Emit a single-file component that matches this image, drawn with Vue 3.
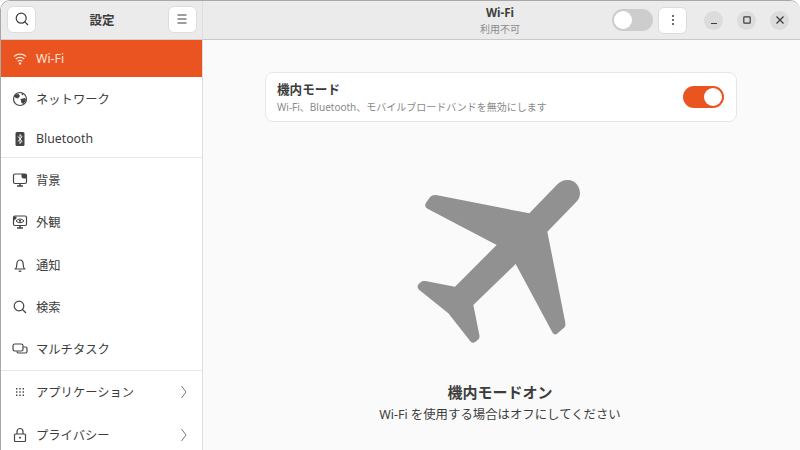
<script setup>
const groups = [
  [
    { label: 'Wi-Fi', icon: 'wifi', h: 37, active: true },
    { label: 'ネットワーク', icon: 'globe', h: 43 },
    { label: 'Bluetooth', icon: 'bt', h: 37 },
  ],
  [
    { label: '背景', icon: 'bg', h: 42 },
    { label: '外観', icon: 'look', h: 42 },
    { label: '通知', icon: 'bell', h: 43 },
    { label: '検索', icon: 'search', h: 42 },
    { label: 'マルチタスク', icon: 'multi', h: 42 },
  ],
  [
    { label: 'アプリケーション', icon: 'apps', h: 42, more: true },
    { label: 'プライバシー', icon: 'lock', h: 43, more: true },
  ],
]
</script>

<template>
  <div class="window">
    <aside class="sidebar">
      <header class="side-head">
        <button class="btn">
          <svg width="16" height="16" viewBox="0 0 16 16" fill="none" stroke="#3d3d3d" stroke-width="1.2">
            <circle cx="7.2" cy="7.2" r="5" />
            <path d="M10.8 10.8 14 14" />
          </svg>
        </button>
        <span class="side-title">設定</span>
        <button class="btn">
          <svg width="14" height="14" viewBox="0 0 14 14" fill="none" stroke="#3d3d3d" stroke-width="1.1">
            <path d="M2.500 3h9M2.500 7h9M2.500 11h9" />
          </svg>
        </button>
      </header>

      <div v-for="(group, g) in groups" :key="g" class="group">
        <div
          v-for="row in group"
          :key="row.label"
          class="row"
          :class="{ active: row.active }"
          :style="{ height: row.h + 'px' }"
        >
          <svg class="row-icon" width="16" height="16" viewBox="0 0 16 16" fill="none" stroke="currentColor" stroke-width="1.200">
            <template v-if="row.icon === 'wifi'">
              <path d="M2 5.500a9 9 0 0 1 12 0M3.800 8a6.200 6.200 0 0 1 8.400 0M5.700 10.300a3.200 3.200 0 0 1 4.600 0" />
              <circle cx="8" cy="12.500" r="1.200" fill="currentColor" stroke="none" />
            </template>
            <template v-else-if="row.icon === 'globe'">
              <circle cx="8" cy="8" r="6.500" />
              <path d="M3 3.500 6.500 3 8 5 6 7.500l-2-.5-2-1.500zM8.500 8l4.500-1 1 2-2.500 4-2-1zM9.500 2l2.500 1-2 1.500z" fill="currentColor" stroke="none" />
            </template>
            <template v-else-if="row.icon === 'bt'">
              <rect x="3.500" y="1" width="9" height="14" rx="1.500" fill="currentColor" stroke="none" />
              <path d="M6 5.500 10 10.200 8 12.500V3.500L10 5.800 6 10.500" stroke="#fff" stroke-width=".9" />
            </template>
            <template v-else-if="row.icon === 'bg'">
              <rect x="1.500" y="2" width="13" height="9.500" rx="1.500" />
              <path d="M5 14h6M8 11.500V14" stroke-width="1.500" />
              <path d="M9.500 2h5v4.500h-2.500a2.500 2.500 0 0 1-2.500-2.500z" fill="currentColor" stroke="none" />
            </template>
            <template v-else-if="row.icon === 'look'">
              <rect x="1.500" y="2" width="13" height="9.500" rx="1.500" />
              <path d="M5 14h6M8 11.500V14" stroke-width="1.500" />
              <path d="M4 7c2.500-2.600 5.500-2.600 8 0-2.500 2.300-5.500 2.300-8 0z" stroke-width="1" />
              <circle cx="8" cy="6.900" r="1.100" fill="currentColor" stroke="none" />
              <path d="M2 2.500h2.500v2L2 6.500z" fill="currentColor" stroke="none" />
            </template>
            <template v-else-if="row.icon === 'bell'">
              <path d="M3.500 12c1.200-1.200 1.300-2.400 1.300-4.500C4.800 5 6 3 8 3s3.200 2 3.200 4.500c0 2.100.1 3.300 1.300 4.500z" />
              <path d="M6.700 14.200h2.600" stroke-width="1.300" />
            </template>
            <template v-else-if="row.icon === 'search'">
              <circle cx="7" cy="7" r="4.800" />
              <path d="M10.500 10.500 14 14" />
            </template>
            <template v-else-if="row.icon === 'multi'">
              <rect x="1" y="3" width="10" height="7" rx="1.800" />
              <path d="M11.500 6H13.500a1.500 1.500 0 0 1 1.500 1.500v3A1.500 1.500 0 0 1 13.500 12H6.500A1.500 1.500 0 0 1 5 10.500" />
            </template>
            <template v-else-if="row.icon === 'apps'">
              <path d="M4 4h1.400v1.400H4zM7.300 4h1.400v1.400H7.300zM10.600 4H12v1.400h-1.400zM4 7.300h1.400v1.400H4zM7.300 7.300h1.400v1.400H7.300zM10.600 7.300H12v1.400h-1.400zM4 10.600h1.400V12H4zM7.300 10.600h1.400V12H7.300zM10.600 10.600H12V12h-1.400z" fill="currentColor" stroke="none" />
            </template>
            <template v-else>
              <rect x="2.500" y="7" width="11" height="7.500" rx="1" />
              <path d="M5 7V4.500a3 3 0 0 1 6 0V7" />
              <circle cx="8" cy="10.700" r="1" fill="currentColor" stroke="none" />
            </template>
          </svg>
          <span class="row-label">{{ row.label }}</span>
          <svg v-if="row.more" class="chevron" width="8" height="14" viewBox="0 0 8 14" fill="none" stroke="#777" stroke-width="1">
            <path d="M1.500 1 6 7l-4.500 6" />
          </svg>
        </div>
      </div>
    </aside>

    <section class="content">
      <header class="main-head">
        <span></span>
        <div class="head-title">
          <strong>Wi-Fi</strong>
          <small>利用不可</small>
        </div>
        <div class="head-actions">
          <div class="toggle off"><i></i></div>
          <button class="btn dots">
            <svg width="4" height="12" viewBox="0 0 4 12" fill="#3d3d3d">
              <circle cx="2" cy="2" r="1" />
              <circle cx="2" cy="6" r="1" />
              <circle cx="2" cy="10" r="1" />
            </svg>
          </button>
          <div class="win-btns">
            <button class="win-btn">
              <svg width="10" height="10" viewBox="0 0 10 10" stroke="#3d3d3d" stroke-width="1.200"><path d="M2 8.500h6" /></svg>
            </button>
            <button class="win-btn">
              <svg width="10" height="10" viewBox="0 0 10 10" fill="none" stroke="#3d3d3d" stroke-width="1.200"><rect x="1.800" y="1.800" width="6.400" height="6.400" rx=".6" /></svg>
            </button>
            <button class="win-btn">
              <svg width="10" height="10" viewBox="0 0 10 10" stroke="#3d3d3d" stroke-width="1.300"><path d="M1.500 1.500 8.500 8.500M8.500 1.500 1.500 8.500" /></svg>
            </button>
          </div>
        </div>
      </header>

      <main class="page">
        <div class="card">
          <div class="card-text">
            <div class="card-title">機内モード</div>
            <div class="card-sub">Wi-Fi、Bluetooth、モバイルブロードバンドを無効にします</div>
          </div>
          <div class="toggle on"><i></i></div>
        </div>

        <svg class="plane" width="200" height="180" viewBox="0 0 600 540" fill="#919191">
          <path d="M388 130 470 45C480 35 490 30 503 30 525 30 540 48 540 70 540 82 535 92 525 100L442 185 496 458C497 466 496 470 490 475L473 490C466 496 461 494 457 487L347 282 220 405 238 495C239 503 238 506 233 510L226 516C220 520 215 519 211 514L145 430 58 360C52 355 51 347 56 342L62 337C66 333 70 332 76 333L165 350 290 225 84 117C75 112 73 105 79 97L90 82C95 76 100 74 108 75Z" />
        </svg>

        <h1 class="status">機内モードオン</h1>
        <p class="hint">Wi-Fi を使用する場合はオフにしてください</p>
      </main>
    </section>
  </div>
</template>

<style>
html, body {
  margin: 0;
  background: #fff;
  overflow: hidden;
}
</style>

<style scoped>
.window {
  width: 800px;
  height: 450px;
  display: flex;
  box-sizing: border-box;
  overflow: hidden;
  border-left: 1px solid #a8a8a8;
  border-top: 1px solid #a8a8a8;
  border-radius: 10px 10px 0 0;
  font-family: "Noto Sans", "Noto Sans CJK JP", sans-serif;
  color: #3d3d3d;
  background: #fafafa;
}

.sidebar {
  width: 201px;
  flex: none;
  background: #fff;
  border-right: 1px solid #dedede;
  overflow: hidden;
}

.side-head {
  padding: 0 5px 2px 6px;
  height: 36px;
  display: flex;
  align-items: center;
  justify-content: space-between;
  background: #ebebeb;
  border-bottom: 1px solid #cfcfcf;
}

.side-title {
  font-size: 12.500px;
  font-weight: 600;
}

.btn {
  width: 29px;
  height: 27px;
  padding: 0;
  display: flex;
  align-items: center;
  justify-content: center;
  background: #fff;
  border: 1px solid #dcdcdc;
  border-radius: 6px;
}

.group + .group {
  border-top: 1px solid #e6e6e6;
}

.group:nth-of-type(2) {
  padding-top: 1px;
}

.row {
  display: flex;
  align-items: center;
  padding: 0 12px 0 11px;
  font-size: 12.300px;
}

.row.active {
  background: #e95420;
  color: #fbe3d9;
}

.row-icon {
  flex: none;
  color: #444;
}

.row.active .row-icon {
  color: #fbe3d9;
}

.row-label {
  margin-left: 8px;
  flex: 1;
}

.chevron {
  flex: none;
  margin-right: 2px;
}

.content {
  flex: 1;
  min-width: 0;
  display: flex;
  flex-direction: column;
}

.main-head {
  height: 38px;
  flex: none;
  display: grid;
  grid-template-columns: 1fr auto 1fr;
  align-items: center;
  background: #ebebeb;
  border-bottom: 1px solid #c9c9c9;
}

.head-title {
  display: flex;
  flex-direction: column;
  align-items: center;
  line-height: 16px;
  margin-right: 3px;
  padding-top: 2px;
}

.head-title strong {
  font-size: 11.500px;
  font-weight: 700;
}

.head-title small {
  font-size: 10px;
  color: #8a8a8a;
}

.head-actions {
  display: flex;
  align-items: center;
  justify-content: flex-end;
  padding-right: 11px;
}

.dots {
  margin-left: 5px;
}

.win-btns {
  display: flex;
  gap: 14px;
  margin-left: 17px;
}

.win-btn {
  width: 19px;
  height: 19px;
  padding: 0;
  border: 0;
  border-radius: 50%;
  background: #dcdcdc;
  display: flex;
  align-items: center;
  justify-content: center;
}

.toggle {
  width: 41px;
  height: 22px;
  border-radius: 11px;
  box-sizing: border-box;
  padding: 2px;
  display: flex;
}

.toggle i {
  width: 18px;
  height: 18px;
  border-radius: 50%;
  background: #fff;
}

.toggle.off {
  background: #cdcdcd;
}

.toggle.on {
  background: #e95420;
  justify-content: flex-end;
}

.page {
  flex: 1;
  display: flex;
  flex-direction: column;
  align-items: center;
  padding: 32px 3px 0 0;
}

.card {
  width: 472px;
  height: 50px;
  box-sizing: border-box;
  flex: none;
  margin-left: 2px;
  display: flex;
  align-items: center;
  justify-content: space-between;
  padding: 0 12px 0 11px;
  background: #fff;
  border: 1px solid #e6e6e6;
  border-radius: 8px;
}

.card-text {
  padding-top: 1px;
}

.card-title {
  font-size: 12.600px;
  font-weight: 600;
  line-height: 18px;
}

.card-sub {
  font-size: 10px;
  line-height: 15px;
  margin-top: 1px;
  color: #8a8a8a;
}

.plane {
  flex: none;
  margin-top: 48px;
}

.status {
  margin: 32px 0 0;
  font-size: 15px;
  font-weight: 600;
  line-height: 20px;
}

.hint {
  margin: 4px 0 0;
  font-size: 12.400px;
  line-height: 18px;
}
</style>
